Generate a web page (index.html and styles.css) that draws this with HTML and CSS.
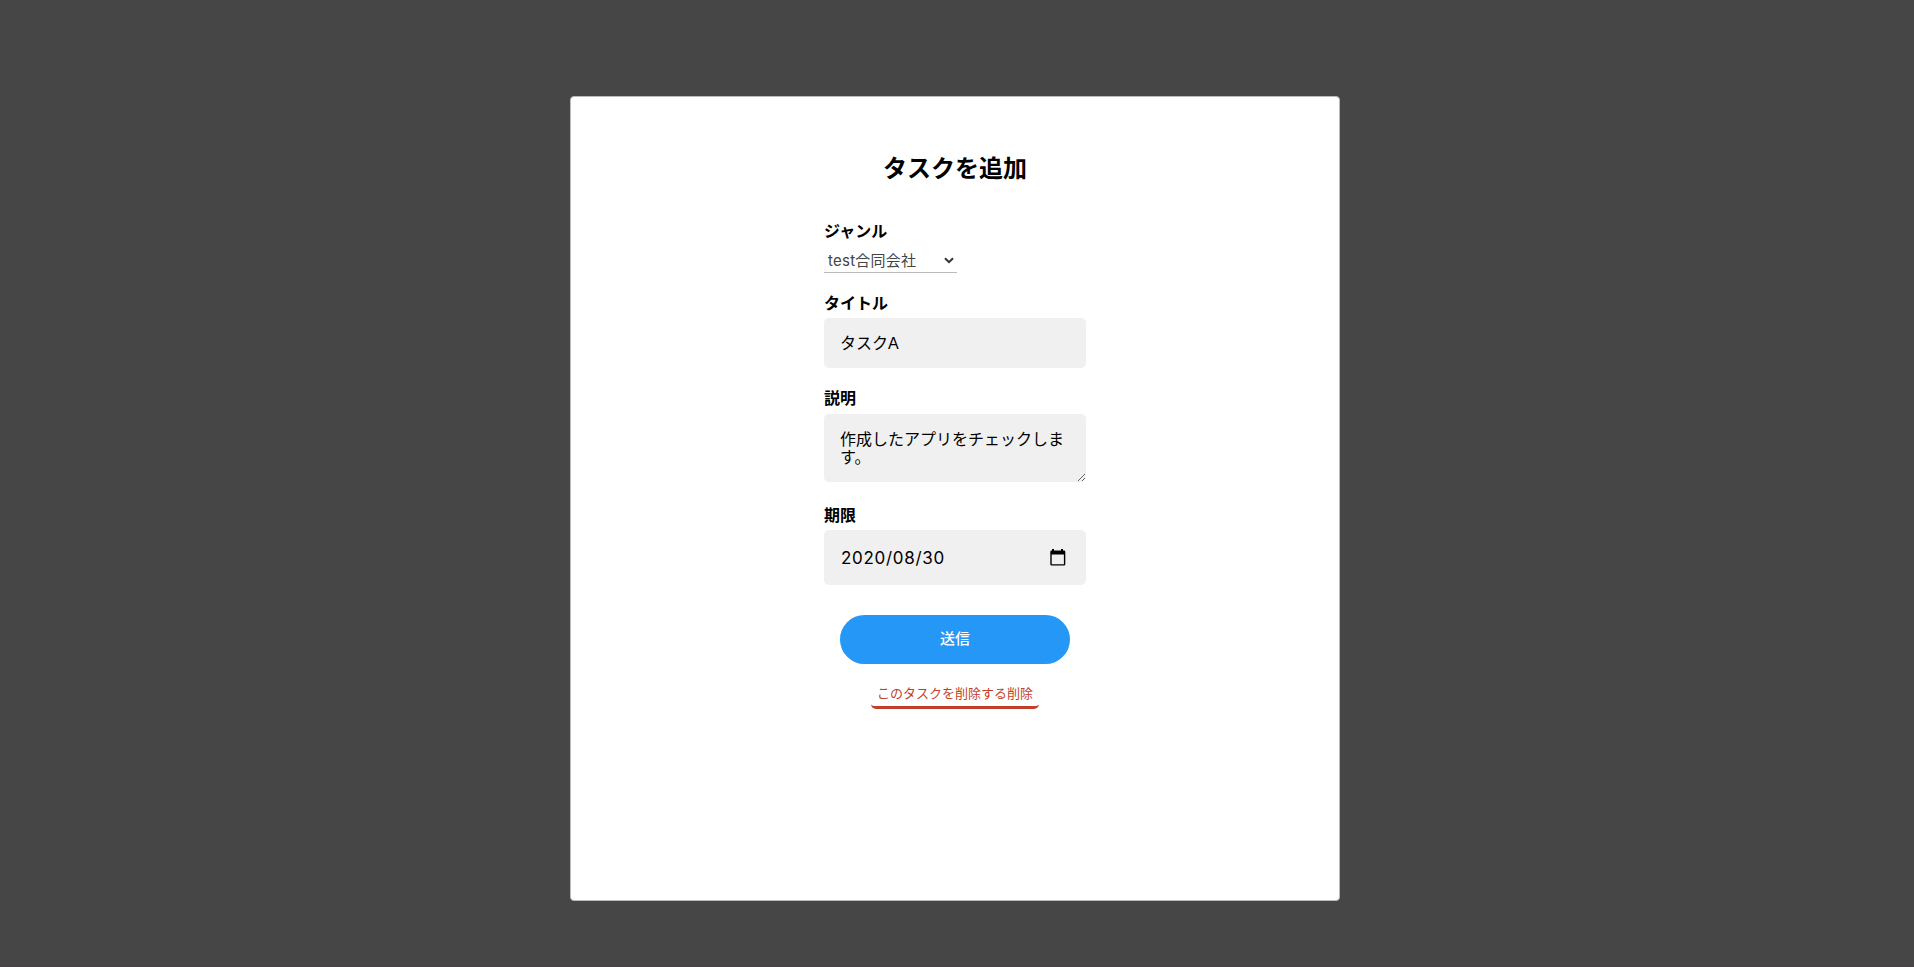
FILE: index.html
```html
<!DOCTYPE html>
<html lang="ja">
<head>
<meta charset="utf-8">
<title>タスクを追加</title>
<link rel="stylesheet" href="styles.css">
</head>
<body>
<main class="modal">
  <h1 class="heading">タスクを追加</h1>
  <form class="form">
    <label class="label label-genre" for="genre">ジャンル</label>
    <div class="select">
      <span class="select-value" id="genre">test合同会社</span>
      <svg class="chevron" width="10" height="8" viewBox="0 0 10 8"><path d="M1 2.2 5 6.2 9 2.2" fill="none" stroke="#333" stroke-width="2"/></svg>
    </div>
    <label class="label" for="title">タイトル</label>
    <input class="field field-title" id="title" value="タスクA">
    <label class="label label-detail" for="detail">説明</label>
    <textarea class="field field-detail" id="detail">作成したアプリをチェックします。</textarea>
    <label class="label" for="due">期限</label>
    <div class="field field-date">
      <span id="due">2020/08/30</span>
      <svg width="16" height="18" viewBox="0 0 16 18"><path d="M2 0H4V1.6H11V0H13V1.6H14Q15.3 1.6 15.3 2.9V15.2Q15.3 16.5 14 16.5H1.6Q.3 16.5.3 15.2V2.9Q.3 1.6 1.6 1.6H2ZM1.7 5.4V15.2H13.9V5.4Z" fill="#000" fill-rule="evenodd"/></svg>
    </div>
    <button class="submit" type="button">送信</button>
    <button class="delete" type="button">このタスクを削除する削除</button>
  </form>
</main>
</body>
</html>
```
FILE: styles.css
```css
* {
  box-sizing: border-box;
}
body {
  margin: 0;
  height: 967px;
  padding-top: 96px;
  background: #464646;
  border-bottom: 1px solid #483f47;
  overflow: hidden;
  color: #000;
  font-family: "Liberation Sans", "Noto Sans CJK JP", sans-serif;
}
.modal {
  width: 770px;
  height: 805px;
  margin: 0 0 0 570px;
  padding-top: 55px;
  background: #fff;
  border: 1px solid #bbb;
  border-radius: 4px;
}
.heading {
  margin: 0;
  font-size: 24px;
  line-height: 34px;
  text-align: center;
}
.form {
  display: flex;
  flex-direction: column;
  width: 262px;
  margin: 34px auto 0 253px;
}
.label {
  height: 27px;
  font-size: 16px;
  font-weight: 700;
  line-height: 25px;
}
.label-genre {
  height: 24px;
  line-height: 24px;
}
.label-detail {
  line-height: 23px;
}
.select {
  display: flex;
  justify-content: space-between;
  align-items: center;
  width: 133px;
  height: 29px;
  margin: 0 0 18px;
  padding: 3px 3px 0 4px;
  border-bottom: 1px solid #bbb;
  color: #444;
  font-size: 15px;
}
.select-value {
  font-family: Inter, "Noto Sans CJK JP", sans-serif;
  letter-spacing: 0.25px;
}
.field {
  width: 262px;
  margin: 0;
  padding: 16px;
  border: 0;
  border-radius: 5px;
  outline: 0;
  background: #f0f0f0;
  color: #000;
  font: 16px/18px "Liberation Sans", "Noto Sans CJK JP", sans-serif;
}
.field-title {
  height: 50px;
  margin-bottom: 19px;
  padding: 14px 16px 17px;
}
.field-detail {
  height: 68px;
  margin-bottom: 21px;
  padding-top: 17px;
  padding-bottom: 15px;
  overflow: hidden;
}
.field-date {
  display: flex;
  justify-content: space-between;
  align-items: center;
  height: 55px;
  padding-left: 17px;
  padding-right: 20px;
  font-family: Inter, sans-serif;
  font-size: 17px;
  letter-spacing: 0.7px;
}
.submit {
  width: 230px;
  height: 49px;
  margin: 30px auto 0;
  padding: 0 0 4px;
  border: 0;
  border-radius: 25px;
  background: #2497f7;
  color: #fff;
  font: 500 15px "Noto Sans CJK JP", sans-serif;
}
.delete {
  width: 168px;
  height: 26px;
  margin: 19px auto 0;
  padding: 0 0 3px;
  border: 0;
  border-bottom: 3px solid #c23f2b;
  border-radius: 5px;
  background: transparent;
  color: #c23f2b;
  font: 13px/20px "Noto Sans CJK JP", sans-serif;
}
```
